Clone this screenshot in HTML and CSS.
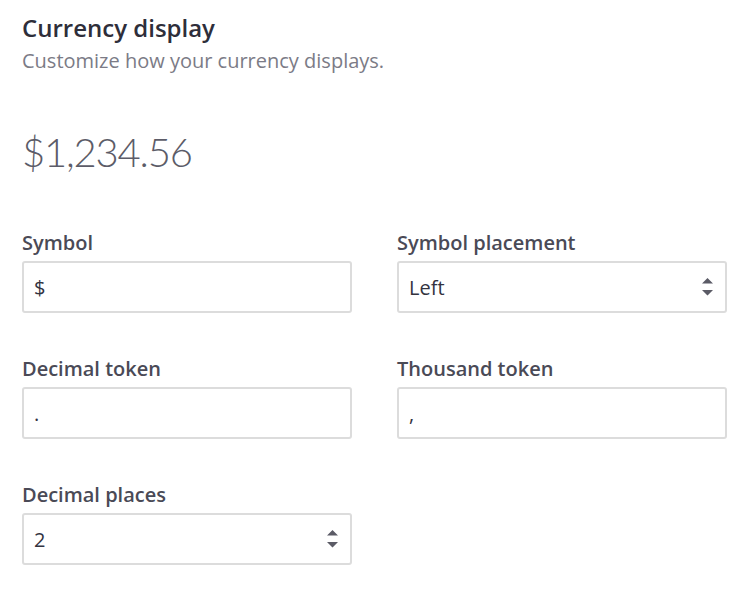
FILE: index.html
```html
<!DOCTYPE html>
<html lang="en">
<head>
<meta charset="utf-8">
<title>Currency display</title>
<link rel="stylesheet" href="styles.css">
</head>
<body>
<main class="panel">
  <header class="head">
    <h1 class="title">Currency display</h1>
    <p class="subtitle">Customize how your currency displays.</p>
  </header>
  <div class="preview">$1,234.56</div>
  <div class="form">
    <div class="field">
      <label class="label">Symbol</label>
      <div class="control"><span class="value">$</span></div>
    </div>
    <div class="field">
      <label class="label">Symbol placement</label>
      <div class="control"><span class="value">Left</span>
        <svg class="updown" width="11" height="18" viewBox="0 0 11 18"><path d="M5.5 0 L11 5.5 H0 Z M0 12 H11 L5.5 17.5 Z" fill="#5b5b66"/></svg>
      </div>
    </div>
    <div class="field">
      <label class="label">Decimal token</label>
      <div class="control"><span class="value">.</span></div>
    </div>
    <div class="field">
      <label class="label">Thousand token</label>
      <div class="control"><span class="value">,</span></div>
    </div>
    <div class="field">
      <label class="label">Decimal places</label>
      <div class="control"><span class="value">2</span>
        <svg class="updown" width="11" height="18" viewBox="0 0 11 18"><path d="M5.5 0 L11 5.5 H0 Z M0 12 H11 L5.5 17.5 Z" fill="#5b5b66"/></svg>
      </div>
    </div>
  </div>
</main>
</body>
</html>
```
FILE: styles.css
```css
html, body {
  margin: 0;
  padding: 0;
  background: #ffffff;
}
body {
  font-family: "Open Sans", Lato, "Liberation Sans", sans-serif;
}
.panel {
  padding: 12px 27px 0 22px;
}
.title {
  margin: 0;
  font-size: 24px;
  line-height: 32px;
  font-weight: 600;
  color: #2e2e3a;
}
.subtitle {
  margin: 3px 0 0;
  font-size: 20px;
  line-height: 28px;
  color: #7b7b86;
}
.preview {
  margin-top: 49px;
  font-family: Lato, "Open Sans", sans-serif;
  font-size: 40px;
  letter-spacing: -1.2px;
  line-height: 56px;
  font-weight: 300;
  color: #5c5c68;
}
.form {
  margin-top: 50px;
  display: grid;
  grid-template-columns: 330px 330px;
  column-gap: 45px;
  row-gap: 43px;
}
.field {
  display: flex;
  flex-direction: column;
}
.label {
  font-size: 20px;
  line-height: 25px;
  font-weight: 600;
  color: #4a4a56;
  margin-bottom: 6px;
}
.control {
  box-sizing: border-box;
  height: 52px;
  border: 2px solid #dcdcdc;
  border-radius: 3px;
  display: flex;
  align-items: center;
  justify-content: space-between;
  padding: 0 12px 0 10px;
}
.value {
  font-size: 20px;
  color: #33333f;
}
.updown {
  display: block;
}
```
